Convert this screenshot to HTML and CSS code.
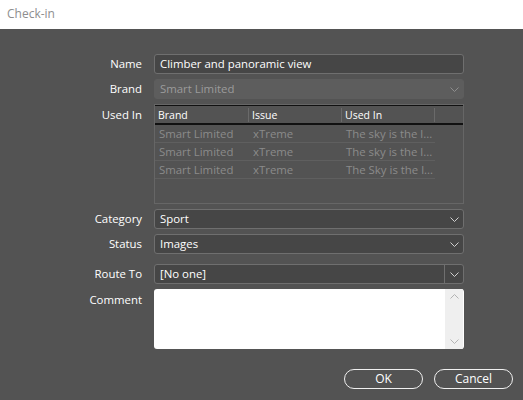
FILE: index.html
```html
<!DOCTYPE html>
<html>
<head>
<meta charset="utf-8">
<link rel="stylesheet" href="styles.css">
</head>
<body>
<div class="titlebar">Check-in</div>
<div class="dialog">
  <div class="form">
    <label class="lbl">Name</label>
    <div class="field input">Climber and panoramic view</div>

    <label class="lbl">Brand</label>
    <div class="field select disabled"><span>Smart Limited</span><span class="chev"><svg width="9" height="5" viewBox="0 0 9 5"><path d="M0.5 0.5 L4.5 4.5 L8.5 0.5" fill="none" stroke="currentColor" stroke-width="1"/></svg></span></div>

    <label class="lbl top">Used In</label>
    <div class="field table">
      <div class="thead">
        <div class="th c1">Brand</div>
        <div class="th c2">Issue</div>
        <div class="th c3">Used In</div>
      </div>
      <div class="tr"><div class="td c1">Smart Limited</div><div class="td c2">xTreme</div><div class="td c3">The sky is the l...</div></div>
      <div class="tr"><div class="td c1">Smart Limited</div><div class="td c2">xTreme</div><div class="td c3">The sky is the l...</div></div>
      <div class="tr"><div class="td c1">Smart Limited</div><div class="td c2">xTreme</div><div class="td c3">The Sky is the l...</div></div>
    </div>

    <label class="lbl">Category</label>
    <div class="field select"><span>Sport</span><span class="chev"><svg width="9" height="5" viewBox="0 0 9 5"><path d="M0.5 0.5 L4.5 4.5 L8.5 0.5" fill="none" stroke="currentColor" stroke-width="1"/></svg></span></div>

    <label class="lbl">Status</label>
    <div class="field select"><span>Images</span><span class="chev"><svg width="9" height="5" viewBox="0 0 9 5"><path d="M0.5 0.5 L4.5 4.5 L8.5 0.5" fill="none" stroke="currentColor" stroke-width="1"/></svg></span></div>

    <label class="lbl route">Route To</label>
    <div class="field select combo route"><span>[No one]</span><span class="chev split"><svg width="9" height="5" viewBox="0 0 9 5"><path d="M0.5 0.5 L4.5 4.5 L8.5 0.5" fill="none" stroke="currentColor" stroke-width="1"/></svg></span></div>

    <label class="lbl top">Comment</label>
    <div class="field textarea">
      <div class="ta-body"></div>
      <div class="scroll">
        <svg width="9" height="5" viewBox="0 0 9 5"><path d="M0.5 4.5 L4.5 0.5 L8.5 4.5" fill="none" stroke="currentColor" stroke-width="1"/></svg>
        <svg width="9" height="5" viewBox="0 0 9 5"><path d="M0.5 0.5 L4.5 4.5 L8.5 0.5" fill="none" stroke="currentColor" stroke-width="1"/></svg>
      </div>
    </div>
  </div>
  <div class="buttons">
    <button class="btn ok">OK</button>
    <button class="btn cancel">Cancel</button>
  </div>
</div>
</body>
</html>
```
FILE: styles.css
```css
html, body {
  margin: 0;
  padding: 0;
}
body {
  width: 523px;
  height: 400px;
  background: #535353;
  font-family: "Open Sans", "Noto Sans", sans-serif;
  font-size: 11.4px;
  overflow: hidden;
}
.titlebar {
  height: 29px;
  background: #ffffff;
  color: #8e8e8e;
  font-size: 12px;
  line-height: 28px;
  padding-left: 7px;
  box-sizing: border-box;
}
.dialog {
  height: 371px;
  background: #535353;
  padding-top: 25px;
  box-sizing: border-box;
}
.form {
  display: grid;
  grid-template-columns: 142px 310px;
  column-gap: 12px;
  row-gap: 5px;
  grid-template-rows: 20px 20px 100px 20px 20px 25px 60px;
}
.lbl {
  color: #ffffff;
  text-align: right;
  line-height: 20px;
}
.lbl.top {
  padding-top: 1px;
}
.lbl.route, .field.route {
  margin-top: 5px;
}
.field {
  box-sizing: border-box;
  color: #ffffff;
  line-height: 18px;
}
.input {
  background: #464646;
  border: 1px solid #6f6f6f;
  border-radius: 3px;
  padding-left: 5px;
}
.select {
  background: #464646;
  border: 1px solid #6f6f6f;
  border-radius: 3px;
  padding-left: 5px;
  display: flex;
  justify-content: space-between;
  align-items: center;
}
.select.disabled {
  background: #5d5d5d;
  border-color: #5d5d5d;
  color: #9b9b9b;
}
.chev {
  width: 18px;
  height: 18px;
  display: flex;
  align-items: center;
  justify-content: center;
  color: #d0d0d0;
}
.chev svg {
  display: block;
}
.select.disabled .chev {
  color: #8e8e8e;
}
.chev.split {
  border-left: 1px solid #6f6f6f;
}
.table {
  border: 1px solid #666666;
  background: #535353;
  padding: 0 28px 0 0;
}
.thead {
  display: flex;
  height: 17px;
  border-top: 1px solid #111111;
  border-bottom: 2px solid #111111;
  margin-right: -28px;
  box-sizing: content-box;
}
.th {
  color: #ffffff;
  font-size: 10.5px;
  padding-left: 3px;
  box-sizing: border-box;
  border-right: 1px solid #6a6a6a;
  height: 14px;
  margin-top: 2px;
  line-height: 14px;
}
.c1 { width: 94px; }
.c2 { width: 93px; }
.c3 { width: 93px; }
.tr {
  display: flex;
  height: 17px;
  border-bottom: 1px solid #5f5f5f;
}
.td {
  color: #8b8b8b;
  line-height: 17px;
  padding-left: 4px;
  box-sizing: border-box;
  white-space: nowrap;
  overflow: hidden;
}
.textarea {
  background: #ffffff;
  border-radius: 3px;
  display: flex;
  overflow: hidden;
}
.ta-body {
  flex: 1;
}
.scroll {
  width: 18px;
  background: #efefef;
  display: flex;
  flex-direction: column;
  justify-content: space-between;
  align-items: center;
  padding: 5px 0 5px;
  color: #b3b3b3;
  margin-right: 1px;
}
.buttons {
  display: flex;
  justify-content: flex-end;
  gap: 11px;
  padding-right: 10px;
  margin-top: 20px;
}
.btn {
  width: 79px;
  height: 20px;
  border: 1.5px solid #f0f0f0;
  border-radius: 10px;
  background: transparent;
  color: #ffffff;
  font-family: "Open Sans", "Noto Sans", sans-serif;
  font-size: 12px;
  padding: 0;
  line-height: 16px;
}
```
